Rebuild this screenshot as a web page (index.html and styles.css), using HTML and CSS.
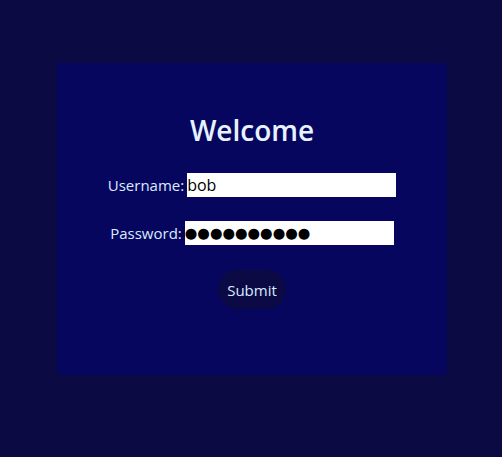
FILE: index.html
```html
<!DOCTYPE html>
<html>
<head>
<meta charset="utf-8">
<link rel="stylesheet" href="styles.css">
</head>
<body>
<main class="card">
  <h1 class="title">Welcome</h1>
  <form class="form">
    <div class="row">
      <label class="label" for="u">Username:</label><input class="field" id="u" type="text" value="bob">
    </div>
    <div class="row">
      <label class="label" for="p">Password:</label><input class="field field-secret" id="p" type="text" value="●●●●●●●●●●" readonly>
    </div>
    <div class="actions">
      <button class="submit" type="button">Submit</button>
    </div>
  </form>
</main>
</body>
</html>
```
FILE: styles.css
```css
html, body {
  margin: 0;
  padding: 0;
}
body {
  background: #0b0a42;
  width: 502px;
  height: 457px;
  overflow: hidden;
  font-family: "Open Sans", "Noto Sans", sans-serif;
  color: #dbeaff;
}
.card {
  box-sizing: border-box;
  width: 390px;
  height: 312px;
  margin: 63px 0 0 57px;
  background: #07065f;
  padding-top: 48px;
  display: flex;
  flex-direction: column;
  align-items: center;
}
.title {
  margin: 0;
  font-size: 28px;
  font-weight: 600;
  line-height: 38px;
  color: #e6f3ff;
}
.form {
  margin-top: 24px;
  display: flex;
  flex-direction: column;
  align-items: center;
  gap: 24px;
}
.row {
  display: flex;
  align-items: center;
  height: 24px;
  font-size: 15px;
}
.label {
  margin-right: 3px;
}
.row-pass .label {
  margin-right: 4px;
}
.field {
  width: 209px;
  height: 24px;
  box-sizing: border-box;
  border: none;
  padding: 0;
  margin: 0;
  font-family: "Open Sans", "Noto Sans", sans-serif;
  font-size: 16px;
  color: #000;
  background: #fff;
  outline: none;
}
.field-secret {
  font-family: "DejaVu Sans", sans-serif;
  font-size: 14.4px;
}
.actions {
  margin-top: 1px;
}
.submit {
  width: 68px;
  height: 39px;
  border: none;
  border-radius: 20px;
  background: #0b0a45;
  color: #dbeaff;
  font-family: "Open Sans", "Noto Sans", sans-serif;
  font-size: 15px;
  padding: 0;
  cursor: pointer;
}
```
